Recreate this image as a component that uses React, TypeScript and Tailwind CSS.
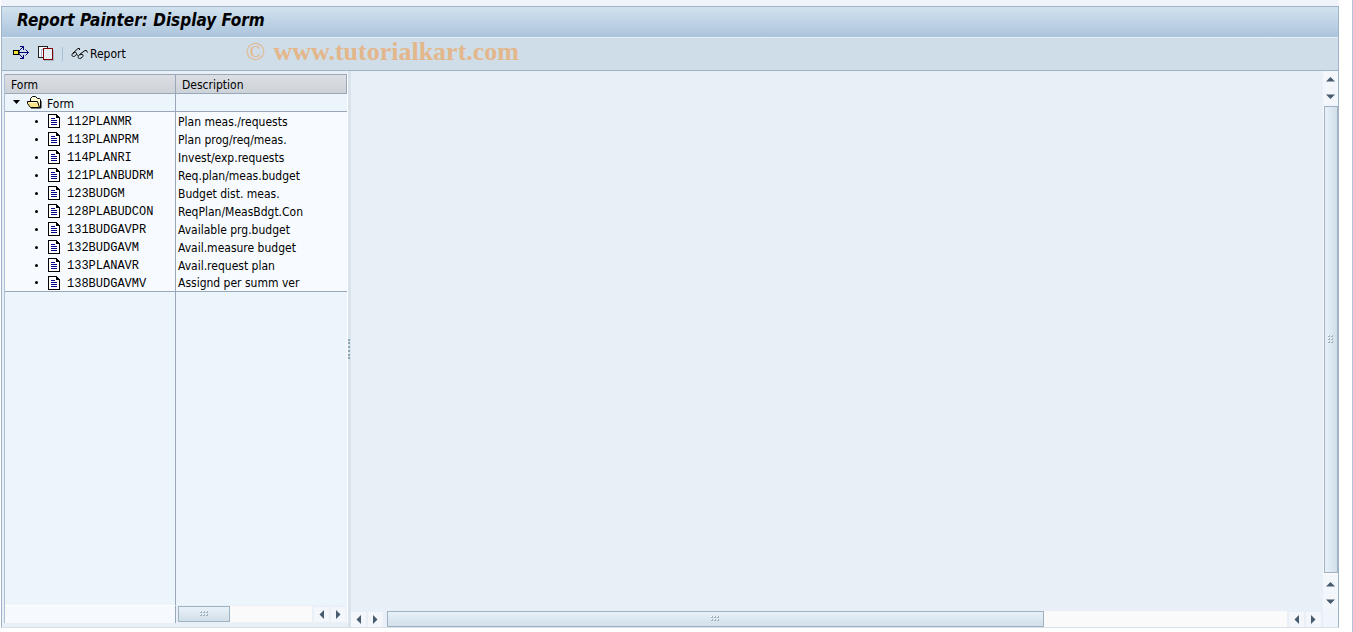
import { useState } from 'react'

const forms = [
  { name: '112PLANMR', description: 'Plan meas./requests' },
  { name: '113PLANPRM', description: 'Plan prog/req/meas.' },
  { name: '114PLANRI', description: 'Invest/exp.requests' },
  { name: '121PLANBUDRM', description: 'Req.plan/meas.budget' },
  { name: '123BUDGM', description: 'Budget dist. meas.' },
  { name: '128PLABUDCON', description: 'ReqPlan/MeasBdgt.Con' },
  { name: '131BUDGAVPR', description: 'Available prg.budget' },
  { name: '132BUDGAVM', description: 'Avail.measure budget' },
  { name: '133PLANAVR', description: 'Avail.request plan' },
  { name: '138BUDGAVMV', description: 'Assignd per summ ver' },
]

const ExpandIcon = () => (
  <svg width="18" height="18" viewBox="0 0 18 18" fill="none" stroke="#00007b">
    <path d="M7 7.5h9.5M7 6l4.500-4.500M7 9l4.500 4.500" />
    <path d="M8 1.500h3.500v3.500M13.500 4.500l3 3-3 3M8 13.500h3.500v-3.500" />
    <rect x="1.500" y="5.500" width="5" height="4" fill="#f5e632" stroke="#000" />
    <path d="M2 9.500h5v-4" stroke="#000" />
  </svg>
)

const CopyIcon = () => (
  <svg width="16" height="16" viewBox="0 0 16 16" shapeRendering="crispEdges">
    <rect x="0.5" y="0.5" width="9" height="11" fill="#f4f7fb" stroke="#222" />
    <path d="M3 11V3h6" fill="none" stroke="#a9b6c6" />
    <rect x="5.5" y="2.5" width="9" height="11" fill="#e6eef6" stroke="#7b0000" />
    <path d="M6 14.5h10M15.500 4v10" stroke="#a9b6c6" />
  </svg>
)

const GlassesIcon = () => (
  <svg width="17" height="14" viewBox="0 0 17 14" fill="none" stroke="#000">
    <path d="M8.500 3V1.500H7L1.500 6.500C.5 8 1 9.500 2.500 9.500S5.500 8 5.500 6.500 3.500 5 2 6.500" />
    <path d="M5.500 7.500l1.500 1" />
    <path d="M16.500 5.500l-1-2H14L8.500 7.500C7 9 6.500 11.500 8.500 11.500s3.500-1.500 3.500-3S10.500 7 8.500 8" />
  </svg>
)

const FolderIcon = () => (
  <svg width="15" height="13" viewBox="0 0 15 13">
    <path d="M3.500 5V2.500l2-2h3l2 2h2l1 1v8" fill="#fffbd0" stroke="#000" />
    <path d="M.5 5.500h10l2 6h-9l-3-4z" fill="#f8e58a" stroke="#000" />
    <path d="M2 6.500h8" stroke="#fffbd0" />
    <path d="M4 12h10V5" fill="none" stroke="#000" />
  </svg>
)

const DocIcon = () => (
  <svg width="12" height="14" viewBox="0 0 12 14" shapeRendering="crispEdges">
    <path d="M.5.5h8l3 3v10H.5z" fill="#fff" stroke="#000" />
    <path d="M8 1h1v1h1v1h1v1H8z" fill="#000" />
    <path d="M3 4.500h4M3 6.500h6M3 8.500h6M3 10.500h6" stroke="#00008b" />
  </svg>
)

const arrows = {
  up: 'M3 9.500h9L7.500 5z',
  down: 'M3 5.500h9L7.500 10z',
  left: 'M10 3v9L5.500 7.500z',
  right: 'M5 3v9l4.500-4.500z',
}

const ArrowButton = ({ dir }: { dir: keyof typeof arrows }) => (
  <button aria-label={`Scroll ${dir}`} className="h-[15px] w-[15px] shrink-0 bg-[#f3f7fc]">
    <svg width="15" height="15" viewBox="0 0 15 15" className="block">
      <path d={arrows[dir]} fill="#465c6e" />
    </svg>
  </button>
)

const Grip = ({ cols, rows }: { cols: number; rows: number }) => (
  <svg width={cols * 3} height={rows * 3} shapeRendering="crispEdges">
    {Array.from({ length: cols * rows }, (_, i) => {
      const x = (i % cols) * 3
      const y = Math.floor(i / cols) * 3
      return (
        <g key={i}>
          <rect x={x} y={y} width="2" height="2" fill="#9fb2c2" />
          <rect x={x} y={y} width="1" height="1" fill="#fff" />
        </g>
      )
    })}
  </svg>
)

const App = () => {
  const [open, setOpen] = useState(true)

  return (
    <div className="flex h-screen flex-col border-r border-[#b3c2d6] bg-white pr-[13px] pb-1 pl-px font-['DejaVu_Sans_Condensed','Noto_Sans',sans-serif] text-xs text-black">
      <div className="h-1.5 shrink-0 bg-[#f0f4fa]"></div>
      <div className="flex min-h-0 flex-1 flex-col border border-[#9fb4c8] border-b-[#d8e0ec] bg-[#e8eff7]">
        <header className="shrink-0 border-b border-[#9fb4c8]">
          <div className="flex h-[31px] items-center border-b border-[#e6f0f8] bg-linear-to-b from-[#d2e2ee] to-[#abc4dc] pl-[15px]">
            <h1 className="pb-1 text-[17px] leading-6 font-bold italic">Report Painter: Display Form</h1>
          </div>
          <div className="flex h-8 items-center bg-[#cfdde8] pl-2.5">
            <button aria-label="Expand" className="mr-2"><ExpandIcon /></button>
            <button aria-label="Copy"><CopyIcon /></button>
            <div className="mx-2 h-3.5 w-px bg-[#a9c0da]"></div>
            <button className="flex items-center gap-0.5">
              <GlassesIcon />
              Report
            </button>
            <div className="ml-[120px] flex gap-2 pb-1 font-['Liberation_Serif',serif] text-[26px] leading-7 text-[#e3b78b]">
              <span>©</span>
              <span className="font-bold">www.tutorialkart.com</span>
            </div>
          </div>
        </header>

        <div className="flex min-h-0 flex-1">
          <aside className="flex w-[346px] shrink-0 flex-col pt-[3px] pb-1 pl-0.5">
            <div className="flex min-h-0 flex-1 flex-col border-r border-l border-r-white border-l-[#b0bfd2] bg-[#ecf4fc]">
              <table className="w-full table-fixed border-separate border-spacing-0 text-left">
                <thead>
                  <tr className="h-5 bg-linear-to-b from-[#dcdfe3] to-[#cdd2d8]">
                    <th className="w-[171px] border-t border-r border-b border-[#9aa7b8] p-0 pt-0.5 pl-1.5 font-normal">Form</th>
                    <th className="border-t border-r border-b border-[#9aa7b8] p-0 pt-0.5 pl-1.5 font-normal">Description</th>
                  </tr>
                </thead>
                <tbody>
                  <tr className="h-[18px]">
                    <td className="border-r border-b border-[#9aa7b8] p-0">
                      <button onClick={() => setOpen(!open)} className="flex h-[17px] items-center pl-2">
                        <svg width="7" height="4" className="mr-[7px] mb-0.5"><path d="M0 0h7L3.500 4z" /></svg>
                        <FolderIcon />
                        <span className="pt-0.5 pl-[5px]">Form</span>
                      </button>
                    </td>
                    <td className="border-b border-[#9aa7b8] p-0"></td>
                  </tr>
                  {open && forms.map((form) => (
                    <tr key={form.name} className="group h-[18px] bg-[#f7fbff]">
                      <td className="border-r border-[#9aa7b8] p-0 group-last:border-b">
                        <div className="flex h-[17px] items-center pl-[30px]">
                          <span className="mr-2.5 h-[3px] w-[3px] rounded-full bg-black"></span>
                          <DocIcon />
                          <span className="pt-0.5 pl-[7px] font-['Liberation_Mono',monospace]">{form.name}</span>
                        </div>
                      </td>
                      <td className="border-[#9aa7b8] p-0 pt-0.5 pl-0.5 leading-[15px] whitespace-nowrap group-last:border-b">{form.description}</td>
                    </tr>
                  ))}
                </tbody>
              </table>
              <div className="flex-1 pl-[170px]">
                <div className="h-full border-l border-[#9aa7b8]"></div>
              </div>
              <div className="flex h-[18px] shrink-0">
                <div className="w-[171px] border-t border-r border-t-white border-r-[#9aa7b8] bg-[#f6faff]"></div>
                <div className="flex flex-1 items-center gap-0.5 bg-[#eaf0f7] pr-px pl-0.5">
                  <div className="flex h-4 flex-1 bg-[#fafafa]">
                    <div className="flex w-[52px] items-center justify-center border border-[#9fb2c2] bg-linear-to-b from-[#e8f1f8] to-[#d2dfe9]">
                      <Grip cols={3} rows={2} />
                    </div>
                  </div>
                  <ArrowButton dir="left" />
                  <ArrowButton dir="right" />
                </div>
              </div>
            </div>
          </aside>

          <div className="flex w-[3px] shrink-0 items-center bg-[#d8e3ec]">
            <div className="h-5 w-full border-l-2 border-dotted border-[#8fa2b2]"></div>
          </div>

          <main className="flex min-w-0 flex-1">
            <div className="flex min-w-0 flex-1 flex-col">
              <div className="flex-1"></div>
              <div className="flex h-4 items-center gap-0.5 pr-0.5">
                <ArrowButton dir="left" />
                <ArrowButton dir="right" />
                <div className="ml-0.5 flex h-4 min-w-0 flex-1 bg-[#fafafa]">
                  <div className="flex w-[73%] items-center justify-center border border-[#9fb2c2] bg-linear-to-b from-[#e8f1f8] to-[#d2dfe9]">
                    <Grip cols={3} rows={2} />
                  </div>
                </div>
                <ArrowButton dir="left" />
                <ArrowButton dir="right" />
              </div>
            </div>
            <div className="flex w-[15px] flex-col gap-0.5 bg-[#f0f5fb] pt-px pb-[18px]">
              <ArrowButton dir="up" />
              <ArrowButton dir="down" />
              <div className="flex min-h-0 flex-1 flex-col bg-[#fafafa] pb-0.5 pl-px">
                <div className="flex flex-1 items-center justify-center border border-[#9fb2c2] bg-linear-to-r from-[#e8f1f8] to-[#d2dfe9]">
                  <Grip cols={2} rows={3} />
                </div>
              </div>
              <ArrowButton dir="up" />
              <ArrowButton dir="down" />
            </div>
          </main>
        </div>
      </div>
    </div>
  )
}

export default App
